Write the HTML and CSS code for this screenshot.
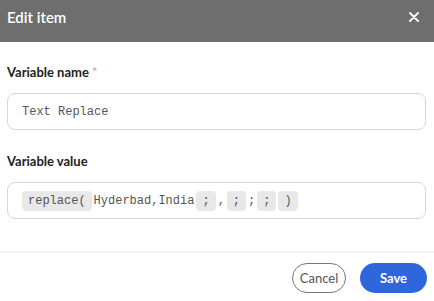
FILE: index.html
```html
<!DOCTYPE html>
<html lang="en">
<head>
<meta charset="UTF-8">
<meta name="viewport" content="width=device-width, initial-scale=1.0">
<title>Edit item</title>
<link rel="stylesheet" href="styles.css">
</head>
<body>

<div class="dialog">
    <div class="dialog-header">
        <span class="dialog-title">Edit item</span>
        <span class="close-btn">
            <svg width="10" height="10" viewBox="0 0 10 10"><path d="M1 1 L9 9 M9 1 L1 9" stroke="#fff" stroke-width="1.8" stroke-linecap="round"/></svg>
        </span>
    </div>

    <div class="dialog-body">
        <div class="field">
            <div class="field-label">Variable name <span class="required">*</span></div>
            <div class="field-box">Text Replace</div>
        </div>
        <div class="field">
            <div class="field-label">Variable value</div>
            <div class="field-box">
                <span class="chip">replace(</span>
                <span>Hyderbad,India</span>
                <span class="chip">;</span>
                <span>,</span>
                <span class="chip">;</span>
                <span>;</span>
                <span class="chip">;</span>
                <span class="chip">)</span>
            </div>
        </div>
    </div>

    <div class="dialog-footer">
        <button class="btn btn-cancel">Cancel</button>
        <button class="btn btn-save">Save</button>
    </div>
</div>

</body>
</html>
```

FILE: styles.css
```css
body {
    font-family: "Lato", "Open Sans", sans-serif;
    background-color: #fff;
    margin: 0;
    padding: 0;
}
.dialog {
    width: 434px;
    height: 301px;
    display: flex;
    flex-direction: column;
}
.dialog-header {
    height: 42px;
    background-color: #6e6e6e;
    display: flex;
    align-items: center;
    justify-content: space-between;
    padding: 0 15px 8px 7px;
    box-sizing: border-box;
}
.dialog-title {
    color: #fff;
    font-size: 15px;
    font-weight: 600;
}
.close-btn {
    display: flex;
    align-items: center;
}
.dialog-body {
    padding: 22px 8px 0 7px;
    height: 211px;
    box-sizing: border-box;
    border-bottom: 2px solid #f1f1f1;
}
.field {
    margin-bottom: 23px;
}
.field-label {
    font-size: 13px;
    font-weight: 700;
    color: #222;
    margin-bottom: 13px;
}
.required {
    color: #aaa;
    font-weight: 400;
}
.field-box {
    height: 37px;
    box-sizing: border-box;
    border: 1px solid #d6d6d6;
    border-radius: 8px;
    padding: 0 12px 0 14px;
    display: flex;
    align-items: center;
    gap: 2px;
    font-family: "Liberation Mono", monospace;
    font-size: 12px;
    color: #555;
}
.chip {
    background-color: #e8e8e8;
    border-radius: 4px;
    padding: 0 6px;
    height: 20px;
    line-height: 20px;
}
.dialog-footer {
    display: flex;
    justify-content: flex-end;
    align-items: center;
    gap: 14px;
    padding: 10px 7px 0 0;
}
.btn {
    height: 30px;
    border-radius: 15px;
    font-family: "Lato", "Open Sans", sans-serif;
    font-size: 13px;
    cursor: pointer;
}
.btn-cancel {
    width: 54px;
    background-color: #fff;
    border: 1px solid #777;
    color: #555;
}
.btn-save {
    width: 67px;
    background-color: #3066dc;
    border: none;
    color: #fff;
    font-weight: 700;
}
```
